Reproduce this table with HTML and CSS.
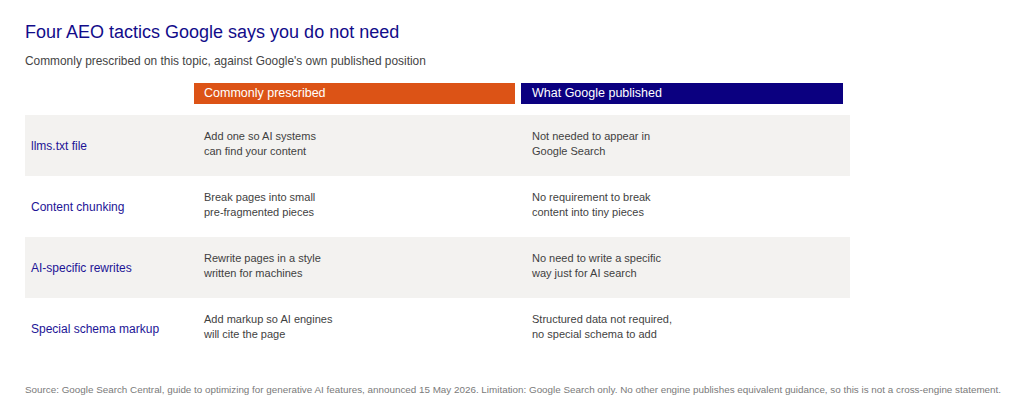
FILE: index.html
```html
<!DOCTYPE html>
<html>
<head>
<meta charset="utf-8">
<link rel="stylesheet" href="styles.css">
</head>
<body>
<div class="page">
  <h1 class="title">Four AEO tactics Google says you do not need</h1>
  <p class="subtitle">Commonly prescribed on this topic, against Google's own published position</p>
  <div class="table">
    <div class="head-row">
      <div class="head-spacer"></div>
      <div class="head head-orange">Commonly prescribed</div>
      <div class="head head-navy">What Google published</div>
    </div>
    <div class="row shaded">
      <div class="label">llms.txt file</div>
      <div class="cell c2">Add one so AI systems<br>can find your content</div>
      <div class="cell c3">Not needed to appear in<br>Google Search</div>
    </div>
    <div class="row">
      <div class="label">Content chunking</div>
      <div class="cell c2">Break pages into small<br>pre-fragmented pieces</div>
      <div class="cell c3">No requirement to break<br>content into tiny pieces</div>
    </div>
    <div class="row shaded">
      <div class="label">AI-specific rewrites</div>
      <div class="cell c2">Rewrite pages in a style<br>written for machines</div>
      <div class="cell c3">No need to write a specific<br>way just for AI search</div>
    </div>
    <div class="row">
      <div class="label">Special schema markup</div>
      <div class="cell c2">Add markup so AI engines<br>will cite the page</div>
      <div class="cell c3">Structured data not required,<br>no special schema to add</div>
    </div>
  </div>
  <p class="footer">Source: Google Search Central, guide to optimizing for generative AI features, announced 15 May 2026. Limitation: Google Search only. No other engine publishes equivalent guidance, so this is not a cross-engine statement.</p>
</div>
</body>
</html>
```

FILE: styles.css
```css
* { box-sizing: border-box; }
body {
  margin: 0;
  background: #ffffff;
  font-family: "Liberation Sans", Arial, sans-serif;
}
.page {
  padding: 22px 25px 0 25px;
}
.title {
  margin: 0;
  font-size: 18px;
  font-weight: normal;
  line-height: 20px;
  color: #120c8a;
}
.subtitle {
  margin: 12px 0 0 0;
  font-size: 11.9px;
  line-height: 14px;
  color: #444444;
}
.table {
  width: 825px;
  margin-top: 15px;
}
.head-row {
  display: grid;
  grid-template-columns: 169px 327px 329px;
}
.head {
  height: 21px;
  font-size: 12.5px;
  line-height: 21px;
  color: #ffffff;
  padding-left: 10px;
}
.head-orange {
  background: #dc5316;
  margin-right: 6px;
}
.head-navy {
  background: #0b0080;
  margin-right: 7px;
  padding-left: 11px;
}
.row {
  display: grid;
  grid-template-columns: 169px 327px 329px;
  height: 61px;
  align-items: center;
}
.head-row + .row { margin-top: 11px; }
.shaded { background: #f3f2f0; }
.label {
  padding-left: 6px;
  font-size: 12px;
  color: #1d1496;
}
.cell {
  font-size: 11px;
  line-height: 15px;
  color: #3f3f3f;
  padding-bottom: 3px;
}
.c2 { padding-left: 10px; }
.c3 { padding-left: 11px; }
.footer {
  margin: 25px 0 0 0;
  font-size: 9.85px;
  line-height: 12px;
  color: #7a7a7a;
  white-space: nowrap;
}
```
